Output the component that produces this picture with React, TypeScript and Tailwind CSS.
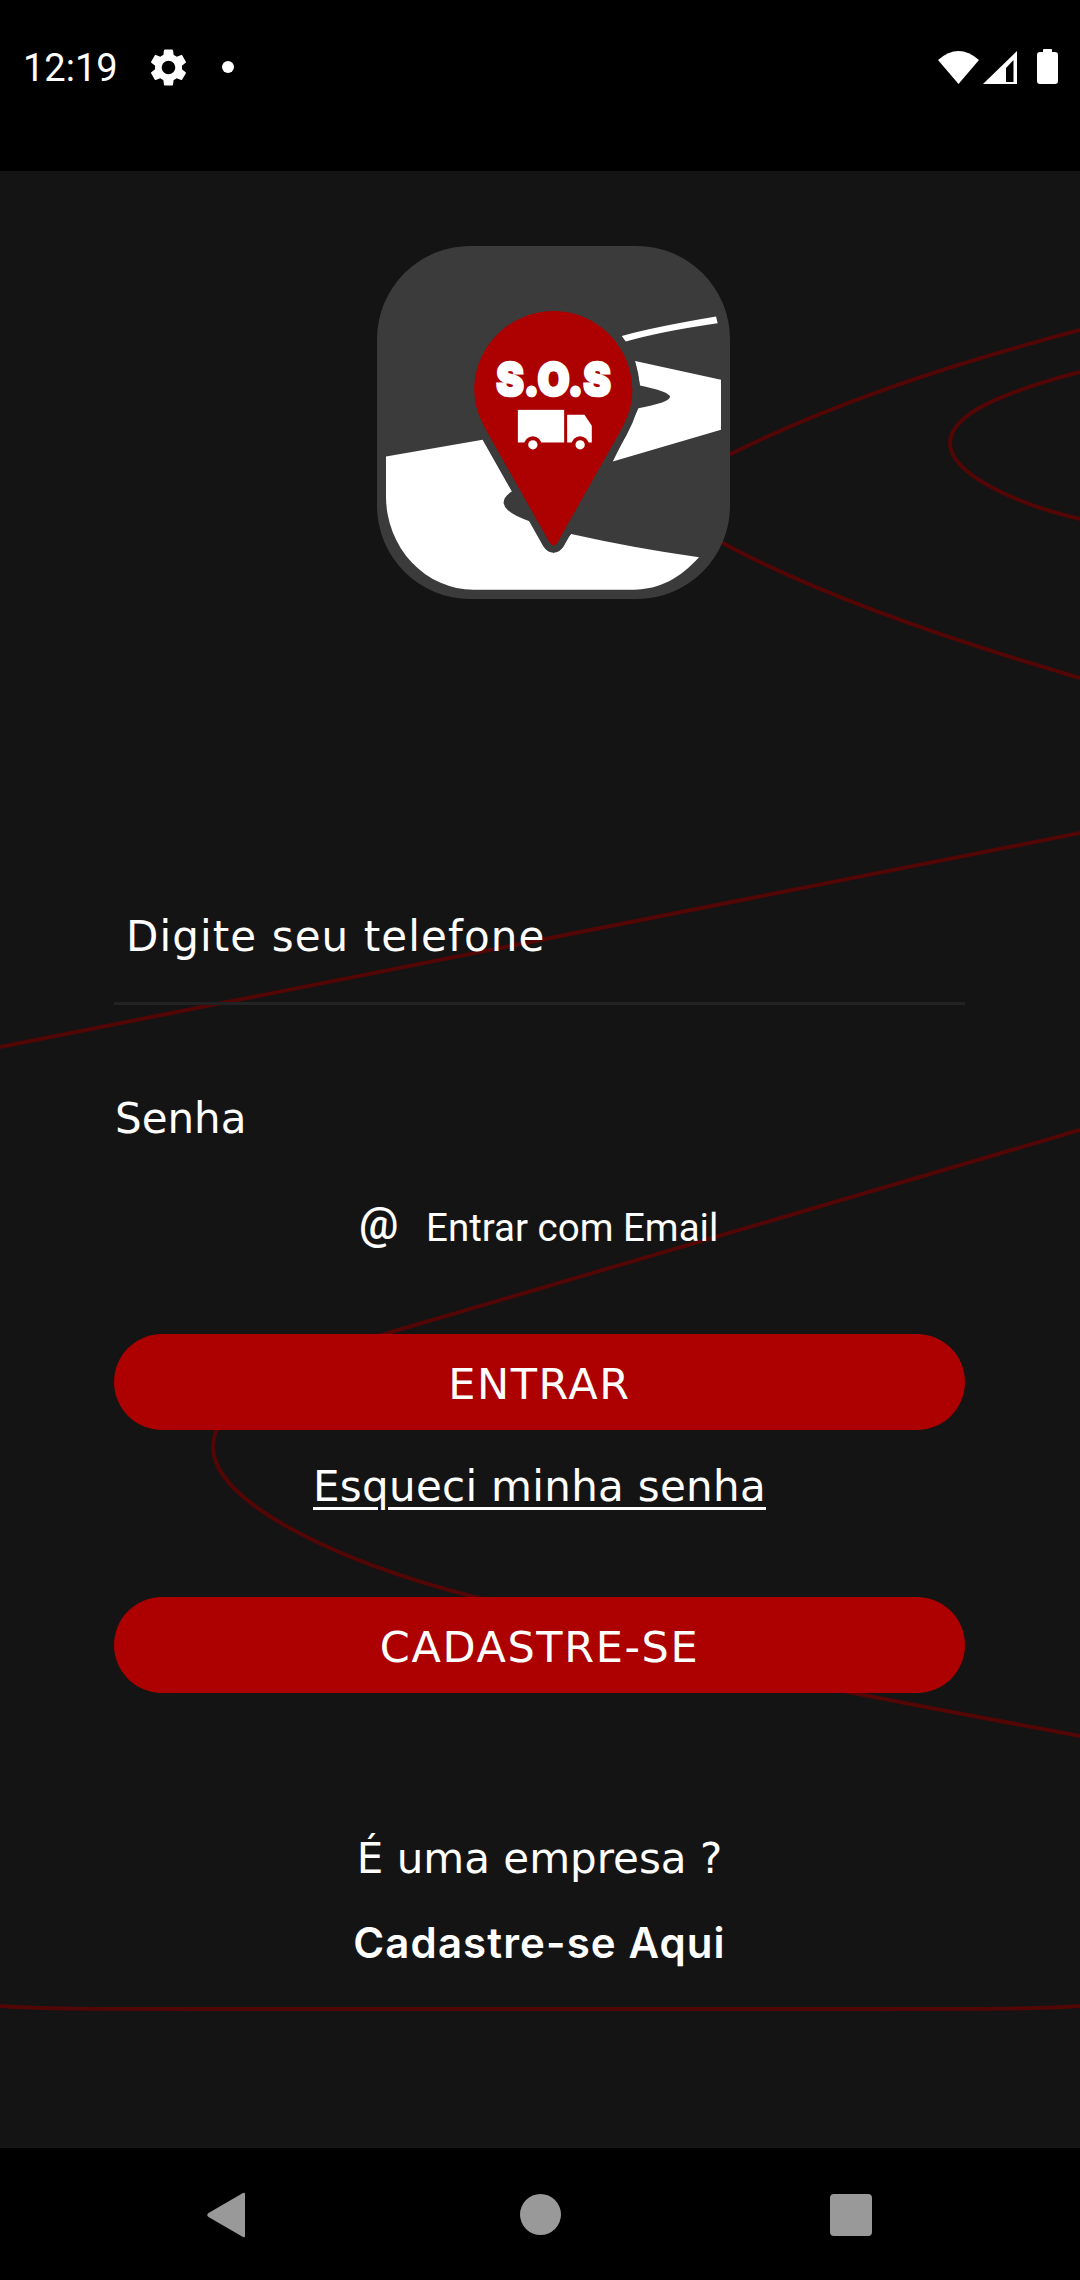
// App.tsx
import React from 'react';

const GEAR =
  'M19.14 12.94c.04-.3.06-.61.06-.94 0-.32-.02-.64-.07-.94l2.03-1.58c.18-.14.23-.41.12-.61l-1.92-3.32c-.12-.22-.37-.29-.59-.22l-2.39.96c-.5-.38-1.03-.7-1.62-.94l-.36-2.54c-.04-.24-.24-.41-.48-.41h-3.84c-.24 0-.43.17-.47.41l-.36 2.54c-.59.24-1.13.57-1.62.94l-2.39-.96c-.22-.08-.47 0-.59.22L2.74 8.87c-.12.21-.08.47.12.61l2.03 1.58c-.05.3-.09.63-.09.94s.02.64.07.94l-2.03 1.58c-.18.14-.23.41-.12.61l1.92 3.32c.12.22.37.29.59.22l2.39-.96c.5.38 1.03.7 1.62.94l.36 2.54c.05.24.24.41.48.41h3.84c.24 0 .44-.17.47-.41l.36-2.54c.59-.24 1.13-.56 1.62-.94l2.39.96c.22.08.47 0 .59-.22l1.92-3.32c.12-.22.07-.47-.12-.61l-2.01-1.58zM12 15.6c-1.98 0-3.6-1.62-3.6-3.6s1.62-3.6 3.6-3.6 3.6 1.62 3.6 3.6-1.62 3.6-3.6 3.6z';

const PIN =
  'M640 273C770 273 877 380 877 510C877 560 860 600 840 635L652 968Q640 986 628 968L440 635C420 600 402 560 402 510C402 380 510 273 640 273Z';

function StatusBar() {
  return (
    <div className="flex h-[171px] shrink-0 items-start bg-black text-white">
      <span className="ml-[23px] mt-[46px] w-[94px] font-['Roboto',sans-serif] text-[38px] leading-[44px]">12:19</span>
      <svg viewBox="0 0 24 24" className="ml-[29px] mt-[45px] h-[45px] w-[45px] fill-white">
        <path d={GEAR} />
      </svg>
      <div className="ml-[31px] mt-[61px] h-[12px] w-[12px] rounded-full bg-white" />
      <svg viewBox="0 0 120 40" className="ml-auto mr-[22px] mt-[47px] h-[40px] w-[120px] fill-white">
        {/* wifi */}
        <path d="M20.5 37L0 13Q20.5 -5 41 13Z" />
        {/* signal */}
        <path fillRule="evenodd" d="M45 37L79 4V37ZM68 35V21L75.5 13V35Z" />
        {/* battery */}
        <path d="M105 5V2.5Q105 2 106 2H113Q114 2 114 2.5V5H117Q120 5 120 8V34Q120 37 117 37H102Q99 37 99 34V8Q99 5 102 5Z" />
      </svg>
    </div>
  );
}

function Logo() {
  return (
    <svg viewBox="110 78 1060 1060" className="ml-[263px] h-[353px] w-[353px] shrink-0">
      <rect x="110" y="78" width="1060" height="1060" rx="280" fill="#3b3b3b" />
      <path
        d="M137 710L427 660L515 815Q490 830 490 850Q495 880 570 905L640 1000L693 943Q880 985 1077 1013C1020 1075 960 1110 880 1110L400 1110A263 280 0 0 1 137 830Z"
        fill="#fff"
      />
      <path
        d="M885 423L1143 480V630L818 725L860 640L895 565Q990 548 990 530Q985 515 900 497Z"
        fill="#fff"
      />
      <path d="M845 348Q950 320 1128 290L1133 310Q960 335 857 365Z" fill="#fff" />
      <path d={PIN} fill="#ad0000" stroke="#3b3b3b" strokeWidth="44" strokeLinejoin="round" paintOrder="stroke" />
      <text
        x="640"
        y="528"
        textAnchor="middle"
        textLength="344"
        lengthAdjust="spacingAndGlyphs"
        fill="#fff"
        stroke="#fff"
        strokeWidth="8"
        fontFamily="Inter, sans-serif"
        fontWeight="900"
        fontSize="140"
      >
        S.O.S
      </text>
      <rect x="533" y="570" width="139" height="98" fill="#fff" />
      <path d="M681 585H733L755 618V668H681Z" fill="#fff" />
      <circle cx="578" cy="675" r="26" fill="#ad0000" />
      <circle cx="720" cy="675" r="26" fill="#ad0000" />
      <circle cx="578" cy="675" r="14" fill="#fff" />
      <circle cx="720" cy="675" r="14" fill="#fff" />
    </svg>
  );
}

// lineas de fondo, coordenadas de pagina menos la barra de estado
function Waves() {
  return (
    <svg
      viewBox="0 171 1080 1977"
      className="absolute inset-0 h-full w-full fill-none stroke-[#520606] stroke-[4px]"
    >
      <path d="M1080 330C960 362 820 405 700 470" />
      <path d="M1080 372C1000 393 950 415 950 443C950 475 1020 505 1080 519" />
      <path d="M700 530C800 590 950 640 1080 678" />
      <path d="M0 1047Q500 950 1080 833" />
      <path d="M1080 1130C850 1198 600 1270 388 1333C300 1360 213 1400 213 1447C213 1500 330 1560 475 1597C620 1640 760 1675 853 1693C930 1708 1000 1721 1080 1736" />
      <path d="M0 2006C40 2009 100 2009 200 2009L880 2009C980 2009 1040 2009 1080 2006" />
    </svg>
  );
}

function RedButton({ label, className }: { label: string; className: string }) {
  return (
    <button
      className={`flex h-[96px] w-[851px] items-center justify-center rounded-[48px] bg-[#ad0000] pt-[4px] text-[43px] tracking-[1.6px] text-white ${className}`}
    >
      {label}
    </button>
  );
}

function LoginForm() {
  return (
    <div className="relative flex flex-col px-[114px] font-['DejaVu_Sans',sans-serif] text-white">
      <div className="-mx-[114px] mt-[75px] flex pl-[114px]">
        <Logo />
      </div>

      <div className="mt-[310px] h-[96px] w-[851px] border-b-[3px] border-[#222222] pl-[12px] text-[42px] leading-[56px] tracking-[1.1px]">
        Digite seu telefone
      </div>

      <div className="mt-[86px] h-[56px] pl-[1px] text-[42px] leading-[56px]">Senha</div>

      <div className="ml-[245px] mt-[56px] flex h-[50px] items-start font-['Roboto',sans-serif]">
        <span className="-mt-[4px] w-[67px] text-[44px] font-medium leading-[50px]">@</span>
        <span className="text-[38.5px] leading-[50px]">Entrar com Email</span>
      </div>

      <RedButton label="ENTRAR" className="mt-[81px]" />

      <a className="mt-[29px] h-[56px] w-[851px] text-center text-[42px] leading-[56px] tracking-[0.3px] underline decoration-[3px] underline-offset-[6px]">
        Esqueci minha senha
      </a>

      <RedButton label="CADASTRE-SE" className="mt-[82px]" />

      <div className="mt-[138px] h-[56px] w-[851px] text-center text-[42px] leading-[56px]">
        É uma empresa ?
      </div>
      <div className="mt-[28px] h-[56px] w-[851px] text-center font-['Inter',sans-serif] text-[42px] font-semibold leading-[56px] tracking-[1.1px]">
        Cadastre-se Aqui
      </div>
    </div>
  );
}

function NavBar() {
  return (
    <div className="relative flex h-[132px] shrink-0 items-start bg-black">
      <svg viewBox="0 0 38 46" className="ml-[207px] mt-[44px] h-[46px] w-[38px] fill-[#999999]">
        <path d="M38 2V44Q38 46 36 45L1.5 25Q-1 23 1.5 21L36 1Q38 0 38 2Z" />
      </svg>
      <div className="ml-[275px] mt-[46px] h-[41px] w-[41px] rounded-full bg-[#999999]" />
      <div className="ml-[269px] mt-[46px] h-[42px] w-[42px] rounded-[4px] bg-[#999999]" />
    </div>
  );
}

export default function App() {
  return (
    <div className="flex h-[2280px] w-[1080px] flex-col overflow-hidden bg-black">
      <StatusBar />
      <div className="relative flex-1 bg-[#141414]">
        <Waves />
        <LoginForm />
      </div>
      <NavBar />
    </div>
  );
}
